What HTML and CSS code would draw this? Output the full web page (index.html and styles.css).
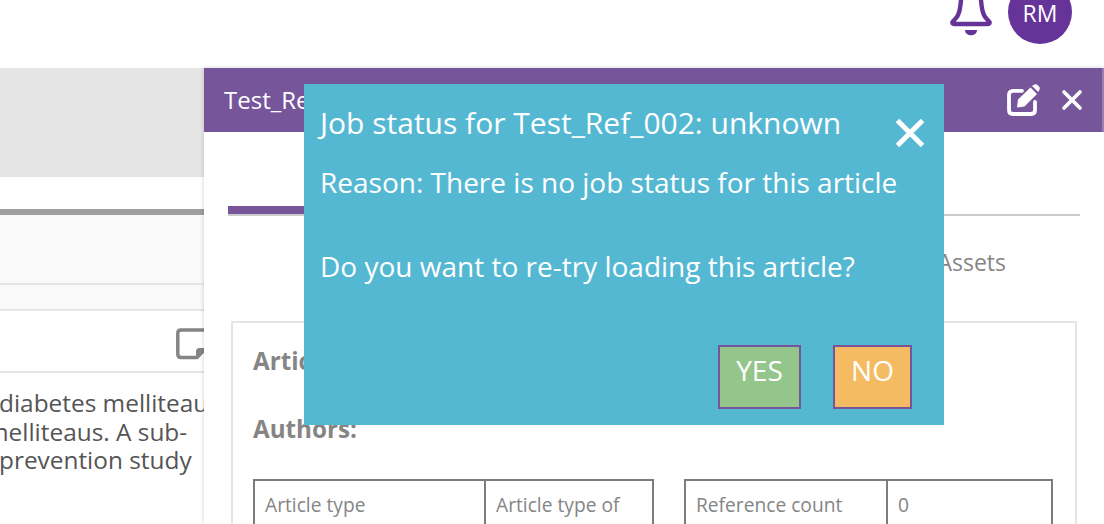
FILE: index.html
```html
<!DOCTYPE html>
<html lang="en">
<head>
  <meta charset="UTF-8">
  <title>Job status</title>
  <link rel="stylesheet" href="styles.css">
</head>
<body>

  <header class="topbar">
    <svg class="bell" width="44" height="40" viewBox="0 0 44 40">
      <path d="M13 0 L12 4 C11.500 10 11 15 9 19 C8 22 5 24 3.500 26 Q3 28 5 28 L39 28 Q41 28 40.500 26 C39 24 36 22 35 19 C33 15 32.500 10 32 4 L31 0" fill="none" stroke="#663399" stroke-width="4.400" stroke-linejoin="round"/>
      <path d="M16 34 L28 34 C28 41 16 41 16 34 Z" fill="#663399"/>
    </svg>
    <div class="avatar"><span class="avatar-text">RM</span></div>
  </header>

  <main class="page">
    <section class="list">
      <div class="list-banner"></div>
      <div class="list-head"></div>
      <div class="list-filter"></div>
      <div class="list-tools">
        <svg class="note" width="36" height="34" viewBox="0 0 36 34">
          <path d="M6 3 H32 V20 L22 30.500 H6 C3.800 30.500 2.800 29.500 2.800 27 V6 C2.800 4 3.800 3 6 3 Z" fill="none" stroke="#858585" stroke-width="3.500"/>
          <path d="M21 31 V25 C21 22 22 21 25 21 H32 Z" fill="#858585"/>
        </svg>
      </div>
      <div class="list-text">
        <div class="line-a">diabetes melliteaus</div>
        <div class="line-b">melliteaus. A sub-</div>
        <div class="line-a">prevention study</div>
      </div>
    </section>

    <section class="panel">
      <div class="panel-head">
        <span class="panel-title">Test_Ref_002</span>
        <div class="panel-icons">
          <svg width="34" height="32" viewBox="0 0 34 32">
            <path d="M15 6.800 H6 C3.500 6.800 2 8.300 2 10.800 V26 C2 28.500 3.500 30 6 30 H24 C26.500 30 28 28.500 28 26 V18" fill="none" stroke="#fff" stroke-width="3.800" stroke-linecap="round"/>
            <path d="M11 15.500 L23.500 3.500 L30 10 L17.500 22.500 L10 23.500 Z" fill="#fff"/>
            <path d="M25 2 L26.800 0.800 C28 0 29.500 0 30.500 1 L32 2.500 C33 3.500 33 5 32.200 6.200 L31.200 8 Z" fill="#fff"/>
          </svg>
          <svg width="22" height="22" viewBox="0 0 22 22">
            <path d="M3 3 L19 19 M19 3 L3 19" stroke="#fff" stroke-width="3.600" stroke-linecap="round"/>
          </svg>
        </div>
      </div>

      <div class="tabs-line"><span class="tab-active"></span></div>
      <div class="tabs"><span>Assets</span></div>

      <div class="article-box">
        <h3 class="article-label">Article title:</h3>
        <h3 class="article-label authors">Authors:</h3>
        <div class="tables">
          <table class="meta meta-left">
            <tr><td class="key">Article type</td><td>Article type of</td></tr>
          </table>
          <table class="meta meta-right">
            <tr><td class="key">Reference count</td><td>0</td></tr>
          </table>
        </div>
      </div>
    </section>
  </main>

  <div class="dialog">
    <div class="dialog-head">
      <span class="dialog-title">Job status for Test_Ref_002: unknown</span>
      <svg class="dialog-close" width="32" height="32" viewBox="0 0 32 32">
        <path d="M3.500 3.500 L28.500 28.500 M28.500 3.500 L3.500 28.500" stroke="#fff" stroke-width="5"/>
      </svg>
    </div>
    <p class="dialog-text reason">Reason: There is no job status for this article</p>
    <p class="dialog-text question">Do you want to re-try loading this article?</p>
    <div class="dialog-actions">
      <button type="button" class="btn btn-yes">YES</button>
      <button type="button" class="btn btn-no">NO</button>
    </div>
  </div>

</body>
</html>
```

FILE: styles.css
```css
html, body {
  height: 524px;
  overflow: hidden;
}

body {
  margin: 0;
  font-family: "Open Sans", Arial, sans-serif;
  background-color: white;
}

.topbar {
  display: flex;
  justify-content: flex-end;
  align-items: flex-end;
  gap: 15px;
  height: 68px;
  box-sizing: border-box;
  padding: 0 32px 24px 0;
  overflow: hidden;
}

.bell {
  flex: none;
  margin-bottom: 8px;
}

.avatar {
  flex: none;
  width: 64px;
  height: 64px;
  border-radius: 50%;
  display: flex;
  align-items: center;
  justify-content: center;
  background-color: #663399;
  color: white;
  font-size: 23px;
}

.avatar-text {
  padding-top: 2px;
}

.page {
  display: grid;
  grid-template-columns: 204px 1fr;
  height: 456px;
}

.list {
  overflow: hidden;
}

.list-banner {
  height: 109px;
  background-color: #e5e5e5;
}

.list-head {
  height: 68px;
  margin-top: 32px;
  border-top: 6px solid #9e9e9e;
  background-color: #f9f9f9;
}

.list-filter {
  height: 24px;
  border-top: 2px solid #e5e5e5;
  border-bottom: 2px solid #e5e5e5;
  background-color: #f9f9f9;
}

.list-tools {
  display: flex;
  height: 62px;
  padding-left: 175px;
  padding-top: 16px;
  box-sizing: border-box;
  border-bottom: 2px solid #e5e5e5;
}

.note {
  flex: none;
}

.list-text {
  padding-top: 16px;
  font-size: 24.400px;
  line-height: 28.500px;
  color: #555;
  white-space: nowrap;
}

.line-a {
  margin-left: -1px;
}

.line-b {
  margin-left: -14px;
}

.panel {
  position: relative;
  overflow: hidden;
  box-shadow: 0 0 4px rgba(0,0,0,0.2);
}

.panel-head {
  display: flex;
  align-items: center;
  justify-content: space-between;
  height: 64px;
  padding: 0 19px 0 20px;
  border-right: 2px solid #9680b3;
  background-color: #76559a;
  color: white;
}

.panel-title {
  font-size: 24px;
  padding-bottom: 2px;
}

.panel-icons {
  display: flex;
  align-items: center;
  gap: 20px;
}

.tabs-line {
  height: 2px;
  margin: 82px 24px 0;
  background-color: #ccc;
  position: relative;
}

.tab-active {
  display: block;
  position: absolute;
  left: 0;
  bottom: 2px;
  width: 100px;
  height: 8px;
  background-color: #76559a;
}

.tabs {
  display: flex;
  justify-content: flex-end;
  height: 105px;
  padding: 30px 98px 0 0;
  box-sizing: border-box;
  font-size: 23px;
  color: #858585;
}

.article-box {
  margin: 0 27px;
  padding: 23px 20px;
  height: 260px;
  border: 2px solid #e5e5e5;
}

.article-label {
  margin: 0;
  font-size: 24.200px;
  line-height: 30px;
  color: #858585;
}

.authors {
  margin-top: 38px;
}

.tables {
  display: flex;
  gap: 30px;
  margin-top: 35px;
}

.meta {
  border-collapse: collapse;
  height: 100px;
  font-size: 19.200px;
  color: #858585;
  table-layout: fixed;
}

.meta td {
  border: 2px solid #7f7b7b;
  padding: 11px 10px;
  vertical-align: top;
  line-height: 26px;
}

.meta-left {
  width: 401px;
}

.meta-left .key {
  width: 209px;
}

.meta-right {
  width: 369px;
}

.meta-right .key {
  width: 180px;
}

.dialog {
  position: absolute;
  left: 304px;
  top: 84px;
  width: 640px;
  height: 341px;
  box-sizing: border-box;
  padding: 16px;
  background-color: #55b8d2;
  color: white;
  font-size: 28px;
}

.dialog-head {
  display: flex;
  justify-content: space-between;
  align-items: flex-start;
}

.dialog-title {
  font-size: 30px;
  line-height: 46px;
}

.dialog-close {
  flex: none;
  margin: 17px 2px 0 0;
}

.dialog-text {
  margin: 0;
  line-height: 40px;
}

.reason {
  margin-top: 13px;
}

.question {
  margin-top: 44px;
}

.dialog-actions {
  display: flex;
  justify-content: flex-end;
  gap: 32px;
  margin: 59px 16px 0 0;
}

.btn {
  font-family: inherit;
  font-size: 28px;
  color: white;
  border: 2px solid #76559a;
  height: 64px;
  padding: 0 0 14px;
}

.btn-yes {
  width: 83px;
  background-color: #94c68b;
}

.btn-no {
  width: 79px;
  background-color: #f4bb62;
}
```
